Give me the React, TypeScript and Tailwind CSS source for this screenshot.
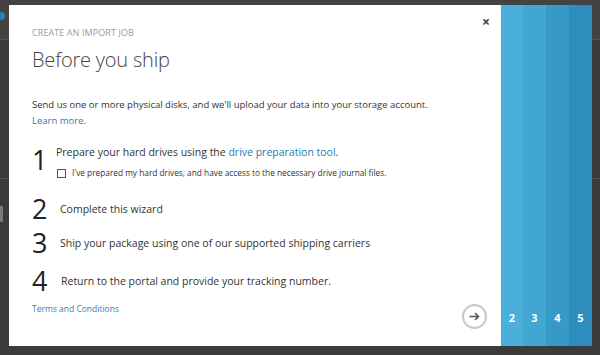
import React from "react";

export default function App() {
  const font = { fontFamily: '"Open Sans", "Noto Sans", sans-serif' };
  return (
    <div className="relative w-[600px] h-[355px] bg-[#3b3b3b] overflow-hidden" style={font}>
      {/* background hints */}
      <div className="absolute left-0 top-0 w-[600px] h-[40px] bg-[#434343] border-b border-[#555]" />
      <div className="absolute left-0 top-[178px] w-[600px] h-px bg-[#555]" />
      <div className="absolute left-0 top-[206px] w-[3px] h-[16px] bg-[#7a7a7a]" />
      <div className="absolute left-0 top-[12px] w-[5px] h-[8px] rounded-r bg-[#2a7fb0]" />

      {/* dialog */}
      <div className="absolute left-[9px] top-[5px] w-[583px] h-[341px] flex">
        <div className="relative w-[492px] h-full bg-white flex flex-col pl-[23px] pr-[20px]">
          <div className="absolute right-[11px] top-[10px] text-[#444] text-[14px] font-bold leading-none">×</div>
          <div className="mt-[23px] text-[9px] text-[#9a9a9a] tracking-[0.01em] leading-none">CREATE AN IMPORT JOB</div>
          <div className="mt-[13px] text-[20px] font-light text-[#444] leading-none tracking-[-0.01em]">Before you ship</div>
          <div className="mt-[27px] text-[9.5px] text-[#333] leading-[16px]">
            Send us one or more physical disks, and we'll upload your data into your storage account.
            <br />
            <span className="text-[#2a7ab0]">Learn more</span>.
          </div>
          <div className="mt-[15px] flex items-start">
            <div className="w-[24px] text-[27px] text-[#222] leading-[20px] mt-[6px]">1</div>
            <div className="flex flex-col">
              <div className="text-[10.5px] text-[#333] leading-[16px]">
                Prepare your hard drives using the <span className="text-[#2a7ab0]">drive preparation tool</span>.
              </div>
              <div className="mt-[9px] flex items-center">
                <div className="w-[9px] h-[9px] border border-[#555] ml-[1px]" />
                <div className="ml-[6px] text-[8.3px] text-[#333] leading-none">
                  I've prepared my hard drives, and have access to the necessary drive journal files.
                </div>
              </div>
            </div>
          </div>
          <div className="mt-[21px] flex items-center">
            <div className="w-[28px] text-[27px] text-[#222] leading-[20px]">2</div>
            <div className="text-[10.5px] text-[#333] leading-[16px]">Complete this wizard</div>
          </div>
          <div className="mt-[14px] flex items-center">
            <div className="w-[28px] text-[27px] text-[#222] leading-[20px]">3</div>
            <div className="text-[10.5px] text-[#333] leading-[16px]">Ship your package using one of our supported shipping carriers</div>
          </div>
          <div className="mt-[18px] flex items-center">
            <div className="w-[29px] text-[27px] text-[#222] leading-[20px]">4</div>
            <div className="text-[10.5px] text-[#333] leading-[16px]">Return to the portal and provide your tracking number.</div>
          </div>
          <div className="mt-[14px] text-[8.5px] text-[#3a7fb0] leading-none">Terms and Conditions</div>
          <div className="absolute left-[453px] top-[299px] w-[25px] h-[25px] rounded-full border-2 border-[#c8c8c8] flex items-center justify-center">
            <svg width="11" height="9" viewBox="0 0 11 9">
              <path d="M0.5 4.5H9.5M6 1L9.5 4.5L6 8" stroke="#555" strokeWidth="1.6" fill="none" />
            </svg>
          </div>
        </div>
        <div className="flex h-full">
          <div className="w-[22px] bg-[#4aafd9] flex items-end justify-center pb-[20px] text-white text-[11px] font-bold">2</div>
          <div className="w-[23px] bg-[#41a6d2] flex items-end justify-center pb-[20px] text-white text-[11px] font-bold">3</div>
          <div className="w-[23px] bg-[#3799c7] flex items-end justify-center pb-[20px] text-white text-[11px] font-bold">4</div>
          <div className="w-[23px] bg-[#2d8ebd] flex items-end justify-center pb-[20px] text-white text-[11px] font-bold">5</div>
        </div>
      </div>
    </div>
  );
}
